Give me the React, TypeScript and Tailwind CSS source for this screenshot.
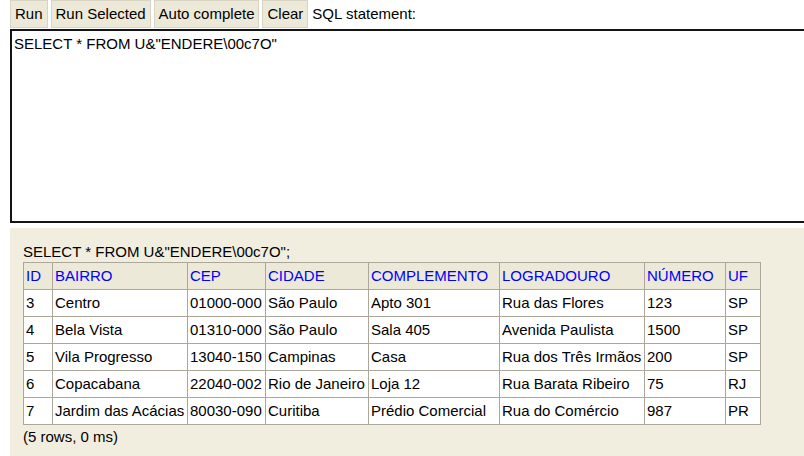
import React from 'react'

const cols = [
  { name: 'ID', w: 'w-[29px]' },
  { name: 'BAIRRO', w: 'w-[135px]' },
  { name: 'CEP', w: 'w-[78px]' },
  { name: 'CIDADE', w: 'w-[103px]' },
  { name: 'COMPLEMENTO', w: 'w-[131px]' },
  { name: 'LOGRADOURO', w: 'w-[145px]' },
  { name: 'NÚMERO', w: 'w-[81px]' },
  { name: 'UF', w: 'w-[35px]' },
]

const rows = [
  ['3', 'Centro', '01000-000', 'São Paulo', 'Apto 301', 'Rua das Flores', '123', 'SP'],
  ['4', 'Bela Vista', '01310-000', 'São Paulo', 'Sala 405', 'Avenida Paulista', '1500', 'SP'],
  ['5', 'Vila Progresso', '13040-150', 'Campinas', 'Casa', 'Rua dos Três Irmãos', '200', 'SP'],
  ['6', 'Copacabana', '22040-002', 'Rio de Janeiro', 'Loja 12', 'Rua Barata Ribeiro', '75', 'RJ'],
  ['7', 'Jardim das Acácias', '80030-090', 'Curitiba', 'Prédio Comercial', 'Rua do Comércio', '987', 'PR'],
]

const buttons = ['Run', 'Run Selected', 'Auto complete', 'Clear']

export default function App() {
  return (
    <div className="w-[804px] h-[456px] overflow-hidden bg-white pl-[10px] text-[15px] text-black font-['Liberation_Sans',Arial,sans-serif]">
      <div className="flex items-stretch h-[29px]">
        {buttons.map((b, i) => (
          <div
            key={b}
            className={`h-[28px] flex items-center px-[4px] bg-[#ece9d8] border border-[#d8d4c4] ${i > 0 ? 'ml-[3px]' : ''}`}
          >
            {b}
          </div>
        ))}
        <div className="h-[28px] flex items-center ml-[4px]">SQL statement:</div>
      </div>
      <div className="w-[820px] h-[194px] border-2 border-[#141414] px-[2px] py-[4px] leading-[17px] whitespace-pre">
        {'SELECT * FROM U&"ENDERE\\00c7O"'}
      </div>
      <div className="mt-[5px] h-[240px] bg-[#f1eedf] pl-[13px] pt-[13px]">
        <div className="leading-[21px]">{'SELECT * FROM U&"ENDERE\\00c7O";'}</div>
        <table className="border-collapse table-fixed w-[738px]">
          <thead>
            <tr className="h-[27px] bg-[#ece9d8]">
              {cols.map((c) => (
                <th
                  key={c.name}
                  className={`${c.w} border border-[#aca899] px-[2px] text-left font-normal text-[#0000ff] whitespace-nowrap`}
                >
                  {c.name}
                </th>
              ))}
            </tr>
          </thead>
          <tbody>
            {rows.map((r) => (
              <tr key={r[0]} className="h-[27px] bg-white">
                {r.map((v, i) => (
                  <td key={i} className="border border-[#aca899] px-[2px] whitespace-nowrap">
                    {v}
                  </td>
                ))}
              </tr>
            ))}
          </tbody>
        </table>
        <div className="leading-[24px]">(5 rows, 0 ms)</div>
      </div>
    </div>
  )
}
